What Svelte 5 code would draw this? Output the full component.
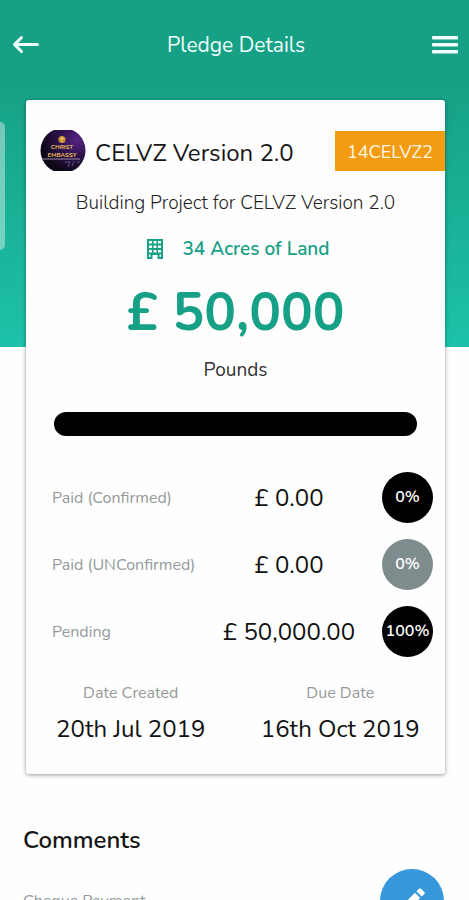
<script lang="ts">
	const payments = [
		{ label: 'Paid (Confirmed)', amount: '£ 0.00', percent: '0%' },
		{ label: 'Paid (UNConfirmed)', amount: '£ 0.00', percent: '0%', muted: true },
		{ label: 'Pending', amount: '£ 50,000.00', percent: '100%' }
	];

	const dates = [
		{ label: 'Date Created', value: '20th Jul 2019' },
		{ label: 'Due Date', value: '16th Oct 2019' }
	];
</script>

<svelte:head>
	<title>Pledge Details</title>
</svelte:head>

<div class="screen">
	<header class="topbar">
		<button class="icon-btn" aria-label="Back">
			<svg width="28" height="20" viewBox="0 0 28 20" fill="none" stroke="currentColor" stroke-width="3" stroke-linecap="round" stroke-linejoin="round">
				<path d="M25.500 9.500H3M9.500 2.500L2.500 9.500l7 7" />
			</svg>
		</button>
		<h1>Pledge Details</h1>
		<button class="icon-btn" aria-label="Menu">
			<svg width="26" height="20" viewBox="0 0 26 20" fill="currentColor">
				<rect y="1" width="26" height="3.4" rx="1" />
				<rect y="8" width="26" height="3.4" rx="1" />
				<rect y="15" width="26" height="3.4" rx="1" />
			</svg>
		</button>
	</header>

	<!-- edge of the previous card in the carousel -->
	<div class="peek" aria-hidden="true"></div>

	<main>
		<article class="card">
			<div class="project">
				<svg width="46" height="41" viewBox="0 0 46 41" aria-hidden="true">
					<defs>
						<radialGradient id="night" cx="0.8" cy="0.25" r="0.8">
							<stop offset="0" stop-color="#542382" />
							<stop offset="0.5" stop-color="#2c124c" />
							<stop offset="1" stop-color="#0d0715" />
						</radialGradient>
						<clipPath id="round"><circle cx="23" cy="20.5" r="22.5" /></clipPath>
					</defs>
					<g clip-path="url(#round)">
						<rect width="46" height="41" fill="url(#night)" />
						<circle cx="22" cy="9.500" r="3.6" fill="#c98f2e" />
						<path d="M20 8.500h4M22 6.500v6" stroke="#f0cb68" stroke-width="1" />
						<g class="logo-text" text-anchor="middle">
							<text x="22" y="19">CHRIST</text>
							<text x="22" y="27">EMBASSY</text>
						</g>
						<path d="M2 29h38" stroke="#9a86a8" stroke-width="1.200" />
						<path d="M25 32h5l-2 5M34 31l-2 5M37 32h3" stroke="#65538a" stroke-width="1" fill="none" />
					</g>
				</svg>
				<h2>CELVZ Version 2.0</h2>
				<span class="code">14CELVZ2</span>
			</div>

			<p class="about">Building Project for CELVZ Version 2.0</p>

			<p class="land">
				<svg width="16" height="20" viewBox="0 0 16 20" aria-hidden="true">
					<path fill="currentColor" fill-rule="evenodd" d="M0 0h16v20h-5.500v-4h-5v4H0zM2 2v2.500h3V2zM6.500 2v2.500h3V2zM11 2v2.500h3V2zM2 6.500V9h3V6.500zM6.500 6.500V9h3V6.500zM11 6.500V9h3V6.500zM2 11v2.500h3V11zM6.500 11v2.500h3V11zM11 11v2.500h3V11zM2 15.500V18h1.500v-2.500zM12.500 15.500V18H14v-2.500z" />
				</svg>
				34 Acres of Land
			</p>

			<p class="total">£ 50,000</p>
			<p class="currency">Pounds</p>

			<div class="bar" role="progressbar" aria-label="Pending" aria-valuenow="100" aria-valuemin="0" aria-valuemax="100"></div>

			<ul class="payments">
				{#each payments as payment}
					<li>
						<span class="label">{payment.label}</span>
						<span class="amount">{payment.amount}</span>
						<span class="percent" class:muted={payment.muted}>{payment.percent}</span>
					</li>
				{/each}
			</ul>

			<dl class="dates">
				{#each dates as date}
					<div>
						<dt>{date.label}</dt>
						<dd>{date.value}</dd>
					</div>
				{/each}
			</dl>
		</article>

		<section class="comments">
			<h2>Comments</h2>
			<div class="comment">
				<p>Cheque Payment</p>
				<button class="fab" aria-label="Write a comment">
					<svg width="34" height="34" viewBox="0 0 24 24" fill="currentColor">
						<path d="M3 17.250V21h3.750L17.810 9.940l-3.750-3.750zM20.710 7.040a1 1 0 0 0 0-1.410l-2.340-2.340a1 1 0 0 0-1.410 0l-1.830 1.830 3.750 3.750z" />
					</svg>
				</button>
			</div>
		</section>
	</main>
</div>

<style>
	:global(body) {
		margin: 0;
		background: #fefefe;
	}

	h1, h2, p, ul, dl, dd {
		margin: 0;
		padding: 0;
	}

	button {
		border: 0;
		padding: 0;
		cursor: pointer;
	}

	svg {
		display: block;
		flex: none;
	}

	.screen {
		position: relative;
		box-sizing: border-box;
		height: 100vh;
		overflow: hidden;
		font-family: Nunito, Lato, sans-serif;
		color: #161616;
		background: linear-gradient(#16a085 0, #16a085 80px, #1dc2a8 347px) 0 0 / 100% 347px no-repeat;
	}

	/* ── top bar ── */
	.topbar {
		display: flex;
		align-items: center;
		justify-content: space-between;
		height: 60px;
		padding: 15px 11px 25px 12px;
		color: #f0fffb;
	}
	.topbar h1 {
		font-size: 21px;
		font-weight: 400;
		line-height: 28px;
	}
	.icon-btn {
		background: none;
		color: inherit;
	}

	.peek {
		position: absolute;
		left: 0;
		top: 122px;
		width: 5px;
		height: 128px;
		border-radius: 0 6px 6px 0;
		background: rgba(255, 255, 255, 0.4);
	}

	/* ── pledge card ── */
	.card {
		margin: 0 24px 0 26px;
		padding: 30px 0 29px;
		border-radius: 3px;
		background: #fefefe;
		box-shadow: 0 1px 4px rgba(0, 0, 0, 0.4);
		text-align: center;
	}

	.project {
		display: flex;
		align-items: flex-end;
		padding-left: 14px;
	}
	.project h2 {
		margin-left: 9px;
		font-size: 24px;
		font-weight: 400;
		line-height: 36px;
	}
	.logo-text {
		fill: #dca957;
		font-size: 6px;
		font-weight: 800;
		line-height: 1;
	}
	.code {
		margin-left: auto;
		padding: 2px 12px 0;
		background: #f39c12;
		color: #fff8e8;
		font-size: 18px;
		line-height: 38px;
	}

	.about {
		margin-top: 20px;
		font-size: 19px;
		font-weight: 300;
		line-height: 24px;
		color: #222;
	}

	.land {
		display: flex;
		align-items: center;
		justify-content: center;
		gap: 19px;
		margin-top: 22px;
		padding-left: 6px;
		color: #16a085;
		font-size: 19px;
		font-weight: 600;
		line-height: 24px;
	}

	.total {
		margin-top: 20px;
		color: #16a085;
		font-size: 53px;
		font-weight: 700;
		line-height: 64px;
	}

	.currency {
		margin-top: 13px;
		font-size: 19px;
		line-height: 24px;
		color: #333;
	}

	.bar {
		height: 24px;
		margin: 30px 28px 0;
		border-radius: 12px;
		background: #000;
	}

	.payments {
		display: grid;
		gap: 16px;
		margin-top: 36px;
		padding: 0 12px 0 26px;
		list-style: none;
	}
	.payments li {
		display: grid;
		grid-template-columns: 1fr 150px 51px;
		column-gap: 18px;
		align-items: center;
	}
	.label {
		text-align: left;
		white-space: nowrap;
	}
	.label, dt {
		color: #949a9b;
		font-size: 16px;
		line-height: 24px;
	}
	.amount, dd {
		font-size: 24px;
		line-height: 32px;
		color: #111;
	}
	.percent {
		border-radius: 50%;
		background: #000;
		color: #fff;
		font-size: 16px;
		font-weight: 600;
		line-height: 51px;
	}
	.percent.muted {
		background: #7f8c8d;
	}

	.dates {
		display: grid;
		grid-template-columns: 1fr 1fr;
		margin-top: 24px;
	}
	.dates dd {
		margin-top: 8px;
	}

	/* ── comments ── */
	.comments {
		padding: 50px 25px 0 23px;
	}
	.comments h2 {
		font-size: 24px;
		font-weight: 600;
		line-height: 32px;
	}
	.comment {
		display: flex;
		align-items: center;
		justify-content: space-between;
		margin-top: 13px;
		color: #949a9b;
		font-size: 16px;
		line-height: 24px;
	}
	.fab {
		display: grid;
		place-items: center;
		width: 64px;
		height: 64px;
		border-radius: 50%;
		background: #3498db;
		color: #fff;
	}
</style>
